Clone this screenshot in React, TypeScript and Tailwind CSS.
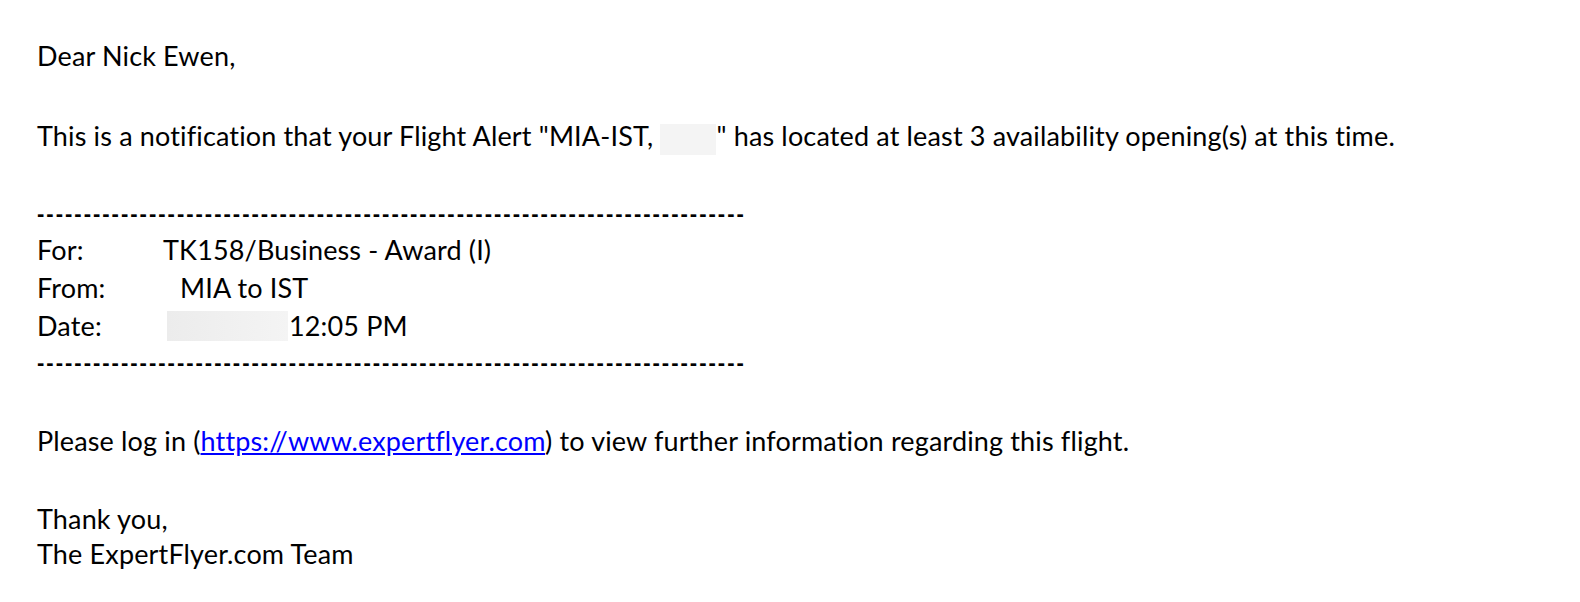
const DASHES = "-".repeat(76);

export default function App() {
  return (
    <div className="min-h-screen bg-white pl-[37px] pt-[38px] text-black text-[27px] leading-[35px] tracking-[0.15px] font-['Lato','Open_Sans',sans-serif]">
      <p>Dear Nick Ewen,</p>

      <p className="mt-[45px]">
        This is a notification that your Flight Alert "MIA-IST,{" "}
        <span className="inline-block h-[31px] w-[56px] bg-[#f4f4f4] align-middle" />
        " has located at least 3 availability opening(s) at this time.
      </p>

      <div className="mt-[41px]">
        <p className="text-[22px] font-bold tracking-[2px] font-['Liberation_Sans',sans-serif]">{DASHES}</p>
        <table className="border-collapse">
          <tbody>
            <tr className="h-[38px]">
              <td className="w-[126px] p-0">For:</td>
              <td className="p-0">TK158/Business - Award (I)</td>
            </tr>
            <tr className="h-[38px]">
              <td className="p-0">From:</td>
              <td className="p-0 pl-[17px]">MIA to IST</td>
            </tr>
            <tr className="h-[38px]">
              <td className="p-0">Date:</td>
              <td className="p-0 pl-[4px]">
                <div className="flex items-center">
                  <span className="inline-block h-[30px] w-[121px] bg-gradient-to-r from-[#ececec] to-[#f4f4f4]" />
                  <span className="ml-[1px]">12:05 PM</span>
                </div>
              </td>
            </tr>
          </tbody>
        </table>
        <p className="text-[22px] font-bold tracking-[2px] font-['Liberation_Sans',sans-serif]">{DASHES}</p>
      </div>

      <p className="mt-[43px]">
        Please log in (
        <a href="https://www.expertflyer.com" className="text-[#0000ff] underline underline-offset-2">
          https://www.expertflyer.com
        </a>
        ) to view further information regarding this flight.
      </p>

      <div className="mt-[43px]">
        <p>Thank you,</p>
        <p>The ExpertFlyer.com Team</p>
      </div>
    </div>
  );
}
